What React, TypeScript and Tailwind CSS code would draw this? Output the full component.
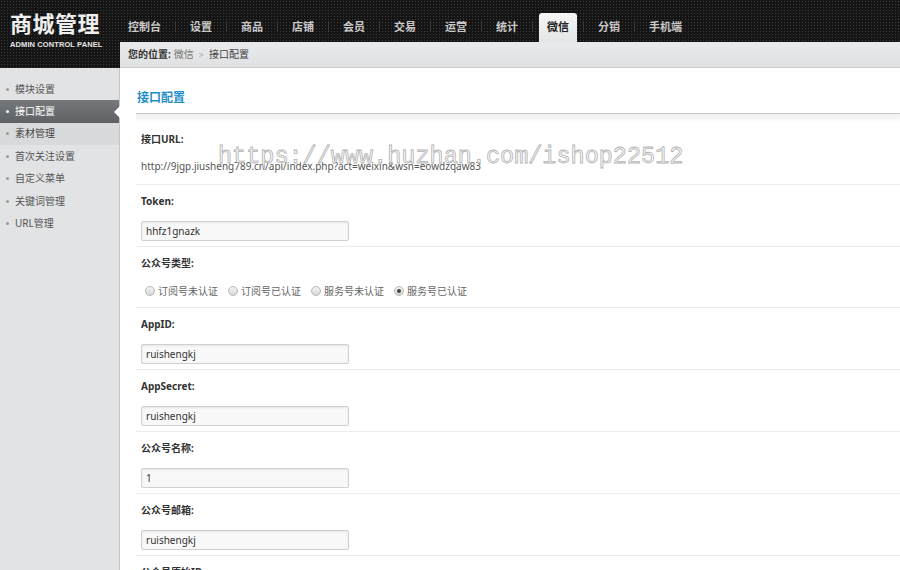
import React from 'react';

const navItems = ['控制台', '设置', '商品', '店铺', '会员', '交易', '运营', '统计', '微信', '分销', '手机端'];
const sideItems = ['模块设置', '接口配置', '素材管理', '首次关注设置', '自定义菜单', '关键词管理', 'URL管理'];
const accountTypes = ['订阅号未认证', '订阅号已认证', '服务号未认证', '服务号已认证'];

const texture =
  'bg-[#151515] bg-[radial-gradient(#3a3a3a_0.8px,transparent_1px)] bg-[length:3px_3px]';

const Radio = ({ checked, label }: { checked?: boolean; label: string }) => (
  <label className="flex items-center gap-[3px] text-[10px] text-[#666]">
    <span className="w-[10px] h-[10px] rounded-full border border-[#b8b8b8] bg-gradient-to-b from-[#f4f4f4] to-[#d6d6d6] flex items-center justify-center">
      {checked && <span className="w-[4px] h-[4px] rounded-full bg-[#444]" />}
    </span>
    {label}
  </label>
);

const Field = ({ label, value }: { label: string; value: string }) => (
  <div className="px-[5px] pt-[8px] pb-[5px] border-b border-[#ededed]">
    <div className="h-[16px] leading-[16px] text-[10px] font-bold text-[#333]">{label}</div>
    <div className="mt-[12px] w-[208px] h-[20px] border border-[#d0d0d0] rounded-[2px] bg-[#f8f8f8] shadow-[inset_0_1px_2px_rgba(0,0,0,0.08)] px-[4px] leading-[18px] text-[10px] text-[#333]">
      {value}
    </div>
  </div>
);

export default function App() {
  return (
    <div className="relative w-[900px] h-[570px] overflow-hidden bg-white font-['Noto_Sans','Noto_Sans_CJK_SC',sans-serif]">
      {/* top bar */}
      <div className="flex h-[68px]">
        <div className={`w-[120px] shrink-0 pl-[10px] pt-[8px] ${texture}`}>
          <div className="text-[22px] leading-[28px] font-bold text-[#eeeeee] tracking-[0.5px] font-['Noto_Sans_CJK_SC',sans-serif]">
            商城管理
          </div>
          <div className="mt-[3px] text-[7.5px] font-bold text-[#e6e6e6] tracking-[0.1px] font-['Liberation_Sans',sans-serif]">
            ADMIN CONTROL PANEL
          </div>
        </div>
        <div className="flex-1 flex flex-col">
          <div className={`h-[42px] flex items-end ${texture}`}>
            {navItems.map((item, i) => (
              <div key={item} className="flex items-end">
                {i > 0 && <span className="w-px h-[10px] bg-[#3c3c3c] mb-[11px]" />}
                <div className={`h-[29px] flex items-center ${i === 0 ? 'pl-0 pr-[6px]' : 'px-[6px]'}`}>
                  {item === '微信' ? (
                    <span className="h-[29px] px-[8px] flex items-center rounded-t-[3px] bg-gradient-to-b from-[#f6f6f6] to-[#e4e5e6] text-[11px] font-bold text-[#222]">
                      {item}
                    </span>
                  ) : (
                    <span className="px-[8px] text-[11px] font-bold text-[#c9c9c9]">{item}</span>
                  )}
                </div>
              </div>
            ))}
          </div>
          <div className="h-[26px] flex items-center px-[8px] bg-gradient-to-b from-[#e9eaeb] to-[#e0e1e2] border-b border-[#c9cacb] text-[10px]">
            <span className="font-bold text-[#333]">您的位置:</span>
            <span className="ml-[3px] text-[#777]">微信</span>
            <span className="mx-[5px] text-[#aaa] text-[9px]">&gt;</span>
            <span className="text-[#444]">接口配置</span>
          </div>
        </div>
      </div>

      {/* body */}
      <div className="flex h-[502px]">
        <div className="w-[120px] shrink-0 bg-[#e2e3e4] border-r border-[#c4c5c6] pt-[10px]">
          {sideItems.map((item) => {
            const active = item === '接口配置';
            return (
              <div
                key={item}
                className={`relative h-[22.4px] flex items-center pl-[6px] text-[10px] ${
                  active
                    ? 'bg-gradient-to-b from-[#76797c] to-[#5f6265] text-white'
                    : item === '素材管理'
                    ? 'bg-[#d9dadb] text-[#444]'
                    : 'text-[#555]'
                }`}
              >
                <span className={`w-[3px] h-[3px] rounded-full mr-[6px] ${active ? 'bg-white' : 'bg-[#999]'}`} />
                {item}
                {active && (
                  <span className="absolute right-[-1px] top-1/2 -translate-y-1/2 w-0 h-0 border-y-[6px] border-y-transparent border-r-[6px] border-r-white" />
                )}
              </div>
            );
          })}
        </div>

        <div className="flex-1 pl-[16px] pt-[22px]">
          <div className="pl-[1px] h-[16px] leading-[16px] text-[12px] font-bold text-[#1d8ec8]">接口配置</div>
          <div className="mt-[7px] h-[10px] border-t border-[#c8c8c8] bg-gradient-to-b from-[#efefef] to-white" />

          <div className="px-[5px] pt-[8px] pb-[10px] border-b border-[#ededed]">
            <div className="h-[16px] leading-[16px] text-[10px] font-bold text-[#333]">接口URL:</div>
            <div className="mt-[11px] h-[16px] leading-[16px] text-[10px] text-[#555]">
              http://9jgp.jiusheng789.cn/api/index.php?act=weixin&amp;wsn=eowdzqaw83
            </div>
          </div>

          <Field label="Token:" value="hhfz1gnazk" />

          <div className="px-[5px] pt-[8px] pb-[8px] border-b border-[#ededed]">
            <div className="h-[16px] leading-[16px] text-[10px] font-bold text-[#333]">公众号类型:</div>
            <div className="mt-[12px] h-[16px] flex items-center gap-[10px] pl-[4px]">
              {accountTypes.map((t, i) => (
                <Radio key={t} label={t} checked={i === 3} />
              ))}
            </div>
          </div>

          <Field label="AppID:" value="ruishengkj" />
          <Field label="AppSecret:" value="ruishengkj" />
          <Field label="公众号名称:" value="1" />
          <Field label="公众号邮箱:" value="ruishengkj" />
          <div className="px-[5px] pt-[8px] h-[16px] leading-[16px] text-[10px] font-bold text-[#333]">公众号原始ID:</div>
        </div>
      </div>

      {/* watermark */}
      <div className="absolute left-[218px] top-[142px] text-[23.5px] leading-[30px] font-['Liberation_Mono',monospace] text-[#f4f4f4]/60 [-webkit-text-stroke:0.8px_#b4b4b4] pointer-events-none whitespace-nowrap">
        https://www.huzhan.com/ishop22512
      </div>
    </div>
  );
}
